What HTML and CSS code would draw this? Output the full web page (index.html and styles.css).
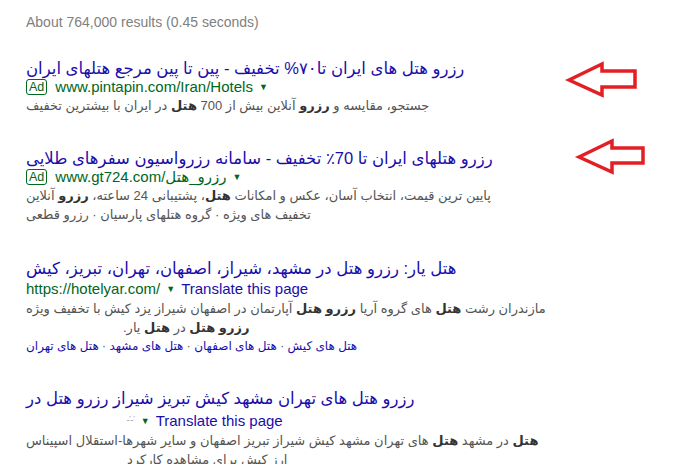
FILE: index.html
```html
<!DOCTYPE html>
<html lang="fa">
<head>
    <meta charset="UTF-8">
    <meta name="viewport" content="width=device-width, initial-scale=1.0">
    <title>رزرو هتل - نتایج جستجو</title>
    <link rel="stylesheet" href="styles.css">
</head>
<body>
    <div class="page">
        <div class="stats">About 764,000 results (0.45 seconds)</div>

        <div class="result ad-result">
            <a class="title" dir="rtl" href="#">رزرو هتل های ایران تا۷۰% تخفیف - پین تا پین مرجع هتلهای ایران</a>
            <div class="url"><span class="ad-badge">Ad</span>www.pintapin.com/Iran/Hotels<span class="caret">&#9660;</span></div>
            <div class="line" dir="rtl">جستجو، مقایسه و <b>رزرو</b> آنلاین بیش از 700 <b>هتل</b> در ایران با بیشترین تخفیف</div>
        </div>

        <div class="result ad-result">
            <a class="title" dir="rtl" href="#">رزرو هتلهای ایران تا 70٪ تخفیف - سامانه رزرواسیون سفرهای طلایی</a>
            <div class="url"><span class="ad-badge">Ad</span>www.gt724.com/رزرو_هتل<span class="caret">&#9660;</span></div>
            <div class="line" dir="rtl">پایین ترین قیمت، انتخاب آسان، عکس و امکانات <b>هتل</b>، پشتیبانی 24 ساعته، <b>رزرو</b> آنلاین</div>
            <div class="line" dir="rtl">تخفیف های ویژه · گروه هتلهای پارسیان · رزرو قطعی</div>
        </div>

        <div class="result">
            <a class="title" dir="rtl" href="#">هتل یار: رزرو هتل در مشهد، شیراز، اصفهان، تهران، تبریز، کیش</a>
            <div class="url">https://hotelyar.com/<span class="caret">&#9660;</span><a class="translate" href="#">Translate this page</a></div>
            <div class="line" dir="rtl">مازندران رشت <b>هتل</b> های گروه آریا <b>رزرو هتل</b> آپارتمان در اصفهان شیراز یزد کیش با تخفیف ویژه</div>
            <div class="line indent-a" dir="rtl"><b>رزرو هتل</b> در <b>هتل</b> یار.</div>
            <div class="sitelinks" dir="rtl"><a href="#">هتل های کیش</a> · <a href="#">هتل های اصفهان</a> · <a href="#">هتل های مشهد</a> · <a href="#">هتل های تهران</a></div>
        </div>

        <div class="result">
            <a class="title" dir="rtl" href="#">رزرو هتل های تهران مشهد کیش تبریز شیراز رزرو هتل در</a>
            <div class="url"><span class="url-stub">ـ'ـ'</span><span class="caret">&#9660;</span><a class="translate" href="#">Translate this page</a></div>
            <div class="line" dir="rtl"><b>هتل</b> در مشهد <b>هتل</b> های تهران مشهد کیش شیراز تبریز اصفهان و سایر شهرها-استقلال اسپیناس</div>
            <div class="line indent-b" dir="rtl">ارز کیش برای مشاهده کارکرد</div>
        </div>

        <!-- red arrows drawn over the screenshot -->
        <svg class="arrows" width="700" height="464" viewBox="0 0 700 464">
            <polygon points="569,80 602,64 602,71 635,71 635,87 602,87 602,95"/>
            <polygon points="579,157 612,141 612,148 643,148 643,163 612,163 612,172"/>
        </svg>
    </div>
</body>
</html>
```

FILE: styles.css
```css
body {
    margin: 0;
    background-color: #fff;
    font-family: "Liberation Sans", "DejaVu Sans", Arial, sans-serif;
}
.page {
    position: relative;
    width: 700px;
    height: 464px;
    overflow: hidden;
    padding: 13px 0 0 26px;
    box-sizing: border-box;
}
a {
    text-decoration: none;
}
.stats {
    color: #808080;
    font-size: 14px;
    line-height: 18px;
    margin-bottom: 27px;
}
.result {
    margin-bottom: 31px;
}
.ad-result {
    margin-bottom: 33px;
}
.ad-result + .result {
    margin-top: 2px;
}
.title {
    display: block;
    color: #1a0dab;
    font-size: 16.5px;
    line-height: 22px;
    white-space: nowrap;
    text-align: left;
}
.ad-result .title {
    line-height: 20px;
}
.url {
    color: #006621;
    font-size: 15px;
    line-height: 20px;
    white-space: nowrap;
}
.ad-result .url {
    line-height: 18px;
}
.ad-badge {
    display: inline-block;
    border: 1px solid #006621;
    border-radius: 3px;
    font-size: 12.5px;
    line-height: 14px;
    padding: 0 2px;
    margin-right: 8px;
    vertical-align: 1px;
}
.caret {
    font-size: 9px;
    margin: 0 6px;
    vertical-align: 2px;
}
.translate {
    color: #1a0dab;
}
.url-stub {
    display: inline-block;
    margin-left: 101px;
    color: #999;
    font-size: 8px;
    vertical-align: 5px;
}
.line {
    color: #545454;
    font-size: 13px;
    line-height: 19px;
    white-space: nowrap;
    text-align: left;
}
.line b {
    color: #333;
}
.indent-a {
    padding-left: 97px;
}
.indent-b {
    padding-left: 101px;
}
.sitelinks {
    color: #545454;
    font-size: 12px;
    line-height: 19px;
    white-space: nowrap;
    text-align: left;
}
.sitelinks a {
    color: #1a0dab;
}
.arrows {
    position: absolute;
    top: 0;
    left: 0;
    pointer-events: none;
}
.arrows polygon {
    fill: none;
    stroke: #e31e24;
    stroke-width: 3.5;
    stroke-linejoin: miter;
}
```
